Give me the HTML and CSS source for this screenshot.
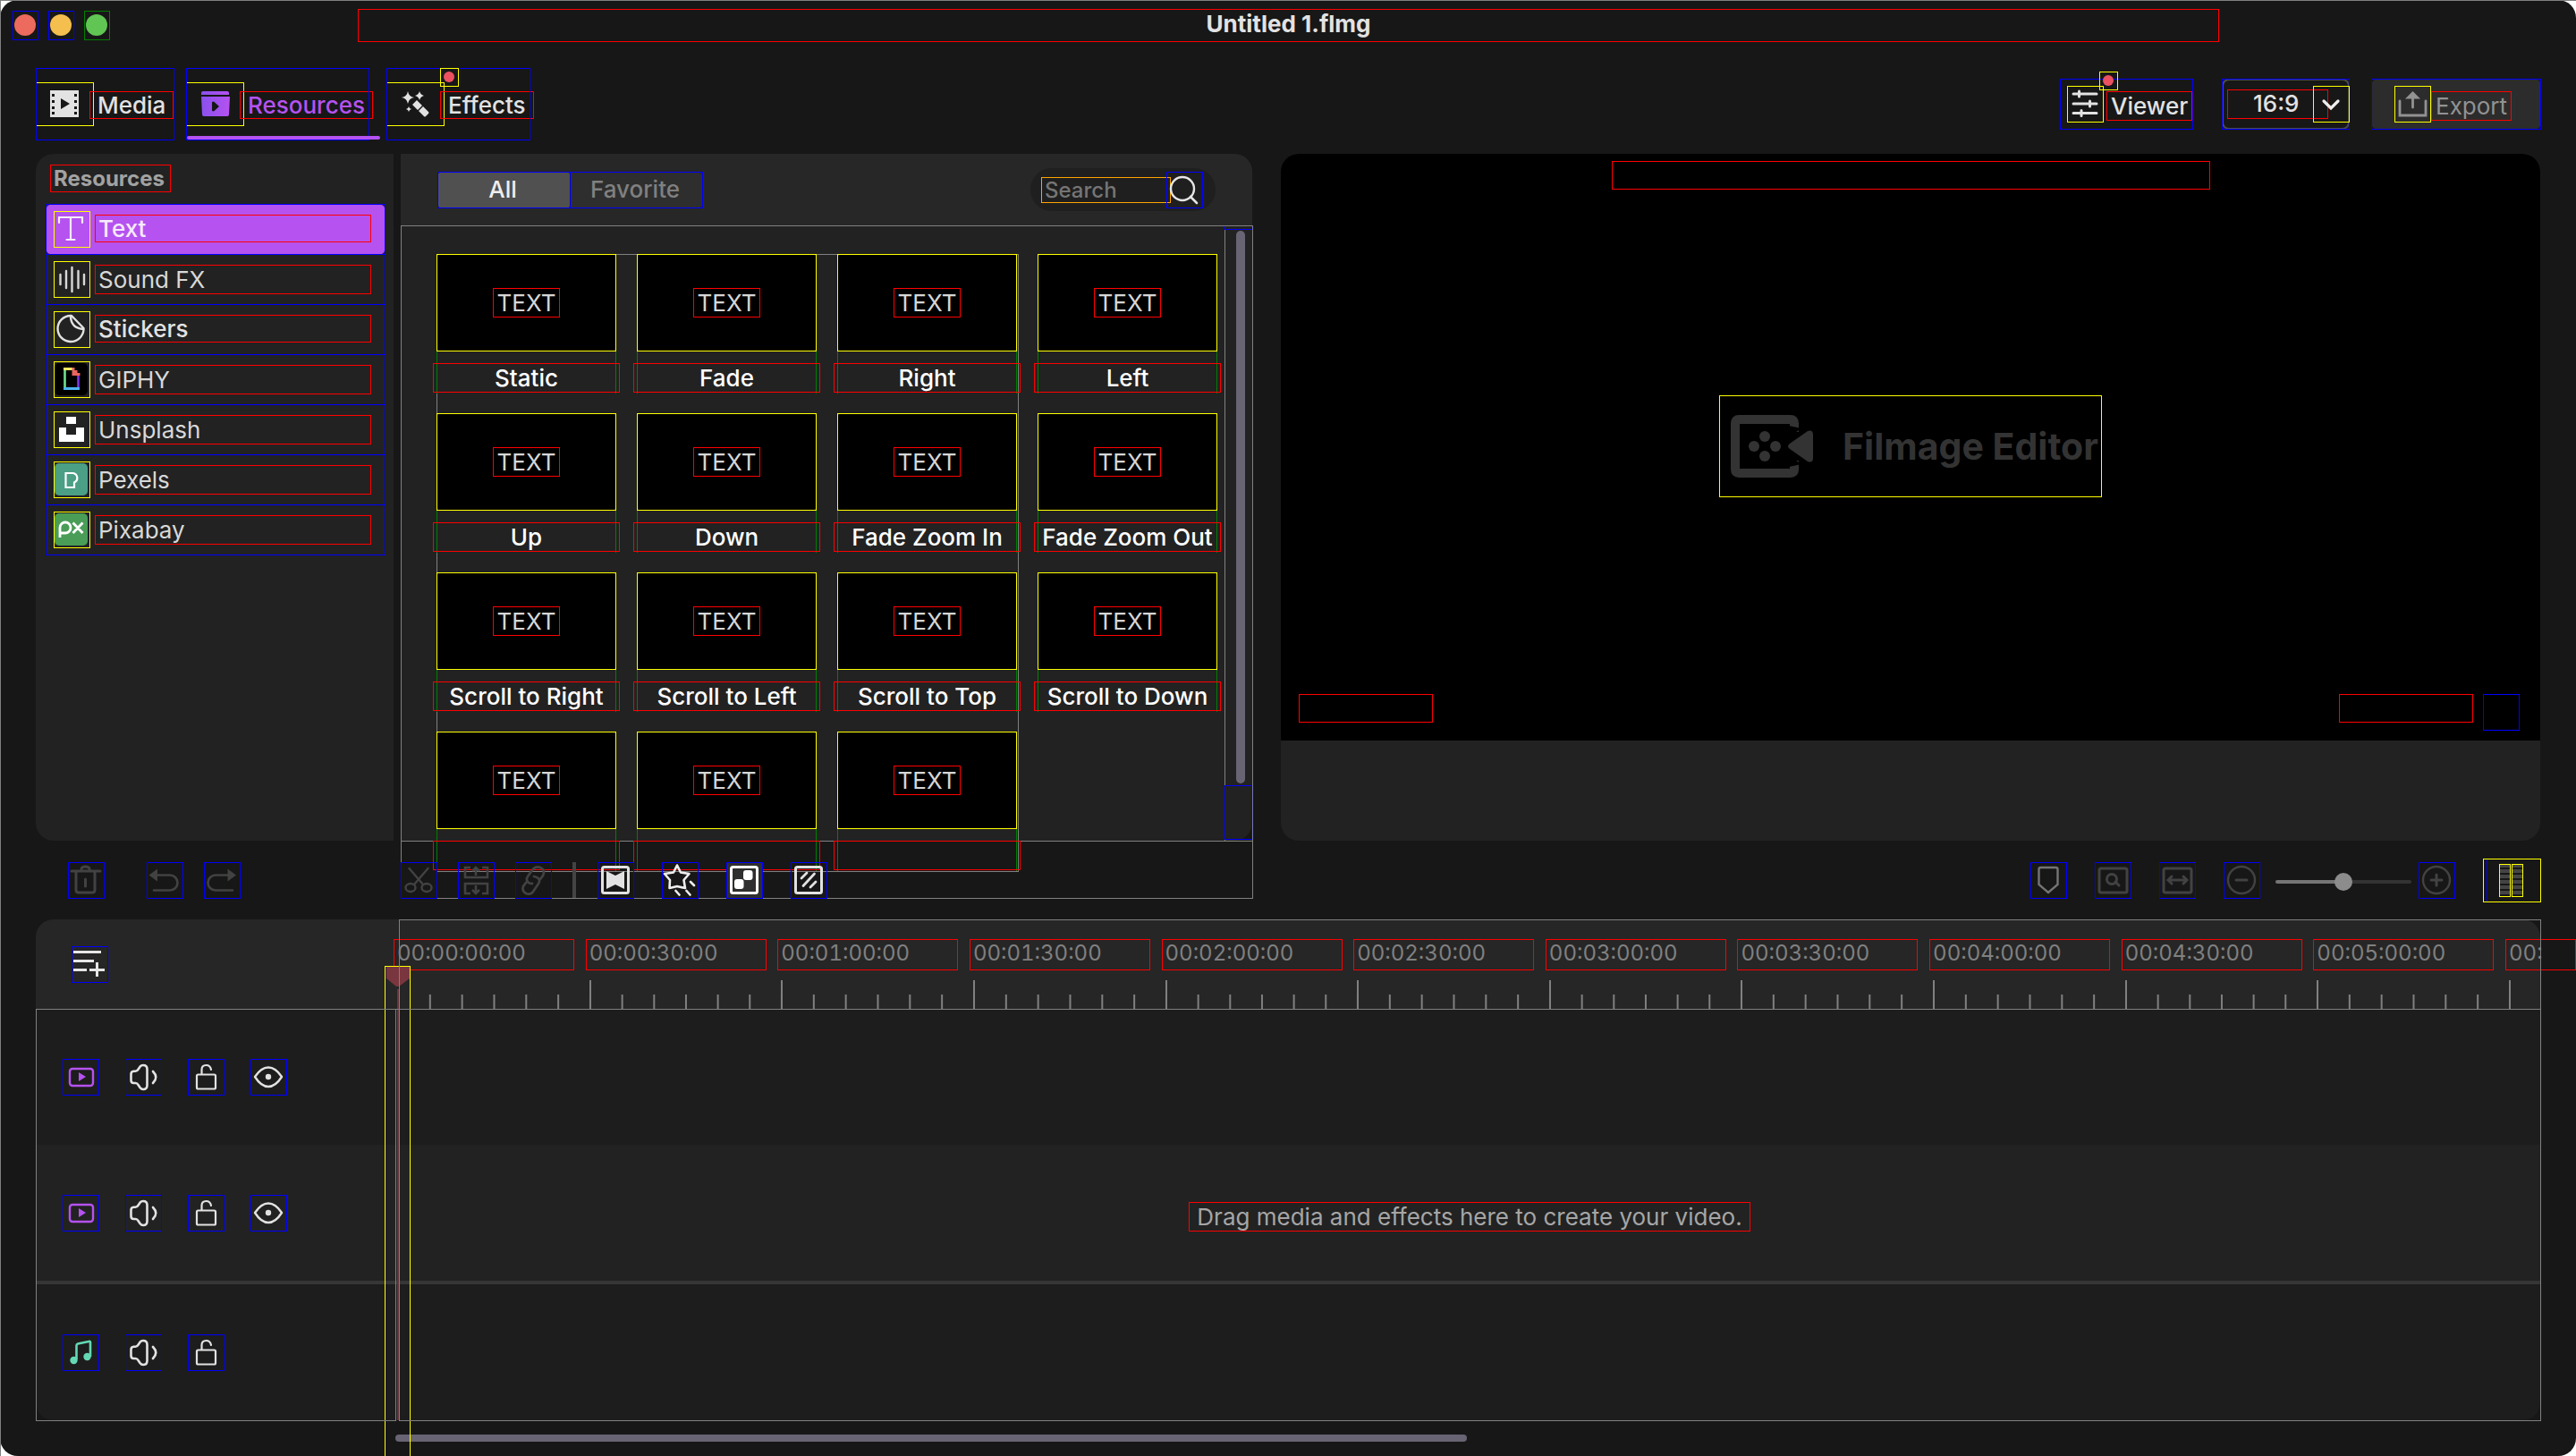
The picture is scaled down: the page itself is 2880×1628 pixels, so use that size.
FILE: index.html
```html
<!DOCTYPE html>
<html lang="en">
<head>
<meta charset="utf-8">
<title>Untitled 1.flmg</title>
<link rel="stylesheet" href="styles.css">
</head>
<body>
<svg class="defs" aria-hidden="true">
  <symbol id="i-video" viewBox="0 0 41 41"><rect x="8" y="11" width="26" height="19" rx="3" fill="none" stroke="currentColor" stroke-width="2.4"/><path d="M18 15l8 5-8 5z" fill="currentColor"/></symbol>
  <symbol id="i-sound" viewBox="0 0 41 41"><path d="M6.500 17q0-3 3-3.300h2q2 0 3-2l2-3Q18 7 20 7q4.500 0 4.500 4.500v18Q24.500 34 20 34q-2 0-3.500-2l-2-3q-1-2-3-2h-2q-3 0-3-3zM31 14q6.500 6.500 0 13" fill="none" stroke="currentColor" stroke-width="2.6" stroke-linecap="round"/></symbol>
  <symbol id="i-lock" viewBox="0 0 41 41"><path d="M15.500 17v-5q0-5 5-5 4.500 0 5.500 5" fill="none" stroke="currentColor" stroke-width="2.200" stroke-linecap="round"/><rect x="10" y="17.500" width="21" height="16" rx="1.500" fill="none" stroke="currentColor" stroke-width="2.200"/></symbol>
  <symbol id="i-eye" viewBox="0 0 41 41"><path d="M5 20Q12 9.500 20 9.500T35 20Q28 31 20 31T5 20z" fill="none" stroke="currentColor" stroke-width="2.400" stroke-linejoin="round"/><circle cx="20" cy="20" r="3.200" fill="currentColor"/></symbol>
</svg>
<div class="window">
  <header class="titlebar">
    <button class="light red" aria-label="Close"></button>
    <button class="light amber" aria-label="Minimize"></button>
    <button class="light green" aria-label="Zoom"></button>
    <h1 class="title box-red">Untitled 1.flmg</h1>
  </header>

  <nav class="topbar">
    <button class="tab tab-media box-blue">
      <svg class="tab-icon box-yellow" viewBox="0 0 65 49"><path fill="#e2e2e2" fill-rule="evenodd" d="M16 9h32v30H16zM18 13v3h3v-3zM18 20v3h3v-3zM18 27v3h3v-3zM18 33v3h3v-3zM43 13v3h3v-3zM43 20v3h3v-3zM43 27v3h3v-3zM43 33v3h3v-3zM28 18v12l10-6z"/></svg>
      <span class="tab-label box-red">Media</span>
    </button>
    <button class="tab tab-resources active box-blue">
      <svg class="tab-icon box-yellow" viewBox="0 0 65 49"><defs><linearGradient id="g"><stop offset="0" stop-color="#8a50ee"/><stop offset="1" stop-color="#b552f0"/></linearGradient></defs><path fill="url(#g)" fill-rule="evenodd" d="M19 10h27q2 0 2 2v2H17v-2q0-2 2-2zM17 16h32l-1 20q0 2-2 2H20q-2 0-2-2zM29 22v10l2 .5 6-5.500-6-5.500z"/></svg>
      <span class="tab-label box-red">Resources</span>
    </button>
    <button class="tab tab-effects box-blue">
      <svg class="tab-icon box-yellow" viewBox="0 0 65 49"><g fill="#e2e2e2"><path d="M24 10q1 6 7 7-6 1-7 7-1-6-7-7 6-1 7-7zM37 10q1 4 5 5-4 1-5 5-1-4-5-5 4-1 5-5zM25 27q.5 2.500 3 3-2.500.5-3 3-.5-2.500-3-3 2.500-.5 3-3z"/><path d="M34 20l6 6-5 5-6-6zM41 27l6 6q1 1 0 2l-3 3q-1 1-2 0l-6-6z"/></g></svg>
      <span class="tab-label box-red">Effects</span>
      <span class="dot box-yellow"></span>
    </button>
    <div class="actions">
      <button class="viewer box-blue">
        <svg class="icon box-yellow" viewBox="0 0 41 41"><path d="M7 9h26M7 20h26M7 30.500h26M13.500 6v6M25.500 17v6M16 27.500v6" stroke="#e2e2e2" stroke-width="3" stroke-linecap="round"/></svg>
        <span class="btn-label box-red">Viewer</span>
        <span class="dot box-yellow"></span>
      </button>
      <div class="ratio box-blue">
        <select aria-label="Aspect ratio"><option>16:9</option></select>
        <span class="ratio-text-box box-red"></span>
        <svg class="ratio-arrow icon box-yellow" viewBox="0 0 41 41"><path d="M12 17l8 8 8-8" fill="none" stroke="#eee" stroke-width="3.200" stroke-linecap="round"/></svg>
      </div>
      <button class="export ring ring-blue">
        <svg class="icon box-yellow" viewBox="0 0 41 41"><path d="M6 17v16h29V17M20.500 14v10" fill="none" stroke="#929292" stroke-width="2.800" stroke-linecap="round"/><path d="M20.500 6l8.500 8.500H12z" fill="#929292"/></svg>
        <span class="btn-label box-red">Export</span>
      </button>
    </div>
  </nav>

  <main class="workspace">
    <aside class="sidebar">
      <h2 class="side-title box-red">Resources</h2>
      <ul class="side-list">
        <li><a class="side-item selected strong ring ring-blue" href="#text"><svg class="icon box-yellow" viewBox="0 0 41 41"><path d="M6 13V7h26v6M19 7v25M14.500 32h9" fill="none" stroke="#f6eafd" stroke-width="2.200" stroke-linecap="round"/></svg><span class="side-label box-red">Text</span></a></li>
        <li><a class="side-item box-blue" href="#sound"><svg class="icon box-yellow" viewBox="0 0 41 41"><path d="M7.500 15v11M14 11v19M20.500 7v27M27.500 11v19M34 15v11" stroke="#d8d8d8" stroke-width="2.400" stroke-linecap="round"/></svg><span class="side-label box-red">Sound FX</span></a></li>
        <li><a class="side-item strong box-blue" href="#stickers"><svg class="icon box-yellow" viewBox="0 0 41 41"><path d="M19 5a14.500 14.500 0 1 0 14.500 15.500V19L20 5zM19 5q0 14 14.500 15" fill="none" stroke="#e2e2e2" stroke-width="2.400" stroke-linejoin="round"/></svg><span class="side-label box-red">Stickers</span></a></li>
        <li><a class="side-item box-blue" href="#giphy"><svg class="icon box-yellow" viewBox="0 0 41 41"><rect x="1" y="2" width="37" height="36" rx="5"/><path d="M11 8.500h10" stroke="#f5e663" stroke-width="3"/><path d="M12.500 10v20" stroke="#6fe08e" stroke-width="2.600"/><path d="M11 30.500h18" stroke="#4eb4f0" stroke-width="3"/><path d="M27.500 16v13" stroke="#7a35e8" stroke-width="2.600"/><path d="M20.500 7h3v3h3v3h3v3h-9z" fill="#e8655f"/></svg><span class="side-label box-red">GIPHY</span></a></li>
        <li><a class="side-item box-blue" href="#unsplash"><svg class="icon box-yellow" viewBox="0 0 41 41"><path d="M14 6h11v8H14zM6 18h8v8h11v-8h9v16H6z" fill="#fff"/></svg><span class="side-label box-red">Unsplash</span></a></li>
        <li><a class="side-item box-blue" href="#pexels"><svg class="icon box-yellow" viewBox="0 0 41 41"><rect x="1" y="2" width="37" height="36" rx="5" fill="#4a9f84"/><path d="M13.500 13h8a5.500 5.500 0 0 1 1.500 10.500V29h-9.500z" fill="none" stroke="#fff" stroke-width="2.200"/></svg><span class="side-label box-red">Pexels</span></a></li>
        <li><a class="side-item box-blue" href="#pixabay"><svg class="icon box-yellow" viewBox="0 0 41 41"><rect x="1" y="2" width="37" height="36" rx="5" fill="#4a9d57"/><path d="M7 29V18a6 6 0 1 1 6 6H8M21.500 12.500l11 11.500M32.500 12.500l-11 11.500" fill="none" stroke="#fff" stroke-width="2.800"/></svg><span class="side-label box-red">Pixabay</span></a></li>
      </ul>
    </aside>

    <section class="library">
      <div class="library-head">
        <div class="segmented">
          <button class="segment on ring ring-blue">All</button>
          <button class="segment ring ring-blue">Favorite</button>
        </div>
        <div class="search">
          <input class="box-orange" type="text" placeholder="Search" aria-label="Search">
          <button class="icon search-btn box-blue" aria-label="Search"><svg viewBox="0 0 41 41"><circle cx="18" cy="19" r="13" fill="none" stroke="#e6e6e6" stroke-width="2.400"/><path d="M27 28l7 7" stroke="#e6e6e6" stroke-width="2.600" stroke-linecap="round"/></svg></button>
        </div>
      </div>
      <div class="library-body">
        <ul class="grid">
          <li class="card"><div class="thumb ring"><span class="box-red">TEXT</span></div><p class="caption box-red">Static</p></li>
          <li class="card"><div class="thumb ring"><span class="box-red">TEXT</span></div><p class="caption box-red">Fade</p></li>
          <li class="card"><div class="thumb ring"><span class="box-red">TEXT</span></div><p class="caption box-red">Right</p></li>
          <li class="card"><div class="thumb ring"><span class="box-red">TEXT</span></div><p class="caption box-red">Left</p></li>
          <li class="card"><div class="thumb ring"><span class="box-red">TEXT</span></div><p class="caption box-red">Up</p></li>
          <li class="card"><div class="thumb ring"><span class="box-red">TEXT</span></div><p class="caption box-red">Down</p></li>
          <li class="card"><div class="thumb ring"><span class="box-red">TEXT</span></div><p class="caption box-red">Fade Zoom In</p></li>
          <li class="card"><div class="thumb ring"><span class="box-red">TEXT</span></div><p class="caption box-red">Fade Zoom Out</p></li>
          <li class="card"><div class="thumb ring"><span class="box-red">TEXT</span></div><p class="caption box-red">Scroll to Right</p></li>
          <li class="card"><div class="thumb ring"><span class="box-red">TEXT</span></div><p class="caption box-red">Scroll to Left</p></li>
          <li class="card"><div class="thumb ring"><span class="box-red">TEXT</span></div><p class="caption box-red">Scroll to Top</p></li>
          <li class="card"><div class="thumb ring"><span class="box-red">TEXT</span></div><p class="caption box-red">Scroll to Down</p></li>
          <li class="card"><div class="thumb ring"><span class="box-red">TEXT</span></div><p class="caption box-red"></p></li>
          <li class="card"><div class="thumb ring"><span class="box-red">TEXT</span></div><p class="caption box-red"></p></li>
          <li class="card"><div class="thumb ring"><span class="box-red">TEXT</span></div><p class="caption box-red"></p></li>
        </ul>
        <div class="scrollbar">
          <div class="scroll-top box-blue"></div>
          <div class="scroll-thumb"></div>
          <div class="scroll-bottom box-blue"></div>
        </div>
      </div>
    </section>

    <section class="preview">
      <div class="screen">
        <div class="screen-title box-red"></div>
        <div class="brand box-yellow">
          <svg viewBox="0 0 106 112"><g fill="none" stroke="#333" stroke-width="10"><path d="M84 40V30q0-4-4-4H22q-4 0-4 4v52q0 4 4 4h58q4 0 4-4V72"/></g><path d="M78 33L92 36 76 47zM78 79L92 76 76 65z" fill="#000"/><path d="M79 53l20-14q6-2 6 4v26q0 6-6 4L79 59q-4-3 0-6z" fill="#333"/><g fill="#333"><circle cx="51" cy="45" r="6"/><circle cx="39" cy="56" r="6"/><circle cx="63" cy="56" r="6"/><circle cx="51" cy="67" r="6"/></g></svg>
          <span>Filmage Editor</span>
        </div>
        <div class="screen-foot">
          <span class="time box-red"></span>
          <span class="time time-end box-red"></span>
          <button class="icon box-blue" aria-label="Full screen"></button>
        </div>
      </div>
    </section>
  </main>

  <div class="toolbar">
    <div class="tools-left">
      <button class="icon dim box-blue" aria-label="Delete"><svg viewBox="0 0 41 41"><path d="M4 10h32M15 8q0-3 4.500-3T24 8M9 11v20q0 3 3 3h15q3 0 3-3V11M19.500 19v8" fill="none" stroke="currentColor" stroke-width="3" stroke-linecap="round"/></svg></button>
      <button class="icon dim undo box-blue" aria-label="Undo"><svg viewBox="0 0 41 41"><path d="M10 14.500h16a8.500 8.500 0 0 1 0 17H8" fill="none" stroke="currentColor" stroke-width="2.600" stroke-linecap="round"/><path d="M2.500 14.500L12 7.500v14z" fill="currentColor"/></svg></button>
      <button class="icon dim box-blue" aria-label="Redo"><svg viewBox="0 0 41 41"><path d="M28 14.500H13a8.500 8.500 0 0 0 0 17h19" fill="none" stroke="currentColor" stroke-width="2.600" stroke-linecap="round"/><path d="M36 14.500L26.500 7.500v14z" fill="currentColor"/></svg></button>
    </div>
    <div class="tools-edit">
      <button class="icon dim box-blue" aria-label="Cut"><svg viewBox="0 0 41 41"><path d="M9.500 7l15.500 18M30.500 7L15 25" stroke="currentColor" stroke-width="2.400" stroke-linecap="round"/><g fill="none" stroke="currentColor" stroke-width="2.400"><ellipse cx="11" cy="28.500" rx="5.500" ry="4.500"/><ellipse cx="29" cy="28.500" rx="5.500" ry="4.500"/></g></svg></button>
      <button class="icon dim box-blue" aria-label="Split"><svg viewBox="0 0 41 41"><path d="M14 6H8v11h25V6h-6M20 15V7M16 10l4-4 4 4M14 35H8V24h25v11h-6M20 26v8M16 31l4 4 4-4" fill="none" stroke="currentColor" stroke-width="2.600"/></svg></button>
      <button class="icon dim box-blue" aria-label="Link"><svg viewBox="0 0 41 41"><path d="M19 24q-5 0-6-4-.5-2 1-4l5-7q4-5 9-3 6 3 3 9l-3 4M21 16q5 1 6 4 .5 2-1 4l-6 9q-3 4-8 2-5-3-3-8l3-4" fill="none" stroke="currentColor" stroke-width="2.800" stroke-linecap="round"/></svg></button>
      <span class="divider"></span>
      <button class="icon box-blue" aria-label="Transition"><svg viewBox="0 0 41 41"><rect x="5.500" y="5.500" width="29" height="29" rx="2" fill="none" stroke="#e2e2e2" stroke-width="3"/><path d="M10 10l10 5 10-5v20l-10-5-10 5z" fill="#e2e2e2"/></svg></button>
      <button class="icon wide box-blue" aria-label="Animation"><svg viewBox="0 0 41 41"><path d="M17 3.500l4 8 9.500 1.500-6 7 1.500 9-9-2-8.500 2 .5-9-6-7 10-1.500zM32 22l4 4M27.500 32l4 4.500M15.500 32l4 4.500" fill="none" stroke="#eee" stroke-width="2.600" stroke-linejoin="round" stroke-linecap="round"/></svg></button>
      <button class="icon wide lit box-blue" aria-label="Picture in picture"><svg viewBox="0 0 41 41"><rect x="5.500" y="5.500" width="29" height="29" rx="2" fill="none" stroke="#fff" stroke-width="3"/><rect x="9" y="19" width="10.500" height="11" rx="3" fill="#fff"/><rect x="19" y="9" width="10.500" height="11" rx="3" fill="#fff"/></svg></button>
      <button class="icon wide box-blue" aria-label="Background"><svg viewBox="0 0 41 41"><rect x="5.500" y="5.500" width="29" height="29" rx="2" fill="none" stroke="#e2e2e2" stroke-width="3"/><path d="M12 18l6-6M14 26.500L26.500 13M22 28l6-6" stroke="#e2e2e2" stroke-width="2.800" stroke-linecap="round"/></svg></button>
    </div>
    <div class="tools-zoom">
      <button class="icon box-blue mid" aria-label="Marker"><svg viewBox="0 0 41 41"><path d="M9.500 8q0-2 2-2h17q2 0 2 2v17l-10.500 9-10.500-9z" fill="none" stroke="currentColor" stroke-width="2.400"/></svg></button>
      <button class="icon dim box-blue" aria-label="Zoom to selection"><svg viewBox="0 0 41 41"><rect x="5" y="7" width="31" height="27" rx="2" fill="none" stroke="currentColor" stroke-width="3"/><circle cx="19" cy="19" r="5.500" fill="none" stroke="currentColor" stroke-width="3"/><path d="M23 22l4 4" stroke="currentColor" stroke-width="3" stroke-linecap="round"/></svg></button>
      <button class="icon dim box-blue" aria-label="Fit to window"><svg viewBox="0 0 41 41"><rect x="5" y="7" width="31" height="27" rx="2" fill="none" stroke="currentColor" stroke-width="3"/><path d="M12 20h17M14 16l-4 4 4 4M27 16l4 4-4 4" fill="none" stroke="currentColor" stroke-width="3" stroke-linecap="round"/></svg></button>
      <button class="icon dim box-blue" aria-label="Zoom out"><svg viewBox="0 0 41 41"><circle cx="20" cy="20" r="15" fill="none" stroke="currentColor" stroke-width="2.400"/><path d="M14 20h12" stroke="currentColor" stroke-width="3" stroke-linecap="round"/></svg></button>
      <input class="zoom-range" type="range" min="0" max="100" value="50" aria-label="Timeline zoom">
      <button class="icon dim zoom-in box-blue" aria-label="Zoom in"><svg viewBox="0 0 41 41"><circle cx="20" cy="20" r="15" fill="none" stroke="currentColor" stroke-width="2.400"/><path d="M14 20h12M20 14v12" stroke="currentColor" stroke-width="3" stroke-linecap="round"/></svg></button>
      <div class="meter box-yellow"><span class="bar box-yellow"></span><span class="bar box-yellow"></span></div>
    </div>
  </div>

  <section class="timeline">
    <div class="ruler-row">
      <div class="ruler-left">
        <button class="icon box-blue" aria-label="Add track"><svg viewBox="0 0 41 41"><path d="M2 6.500h31M2 16.500h23M2 26.500h15M20 26.500h17M28.500 18v16" stroke="#e6e6e6" stroke-width="3"/></svg></button>
      </div>
      <ol class="ruler">
        <li><span class="stamp box-red">00:00:00:00</span></li>
        <li><span class="stamp box-red">00:00:30:00</span></li>
        <li><span class="stamp box-red">00:01:00:00</span></li>
        <li><span class="stamp box-red">00:01:30:00</span></li>
        <li><span class="stamp box-red">00:02:00:00</span></li>
        <li><span class="stamp box-red">00:02:30:00</span></li>
        <li><span class="stamp box-red">00:03:00:00</span></li>
        <li><span class="stamp box-red">00:03:30:00</span></li>
        <li><span class="stamp box-red">00:04:00:00</span></li>
        <li><span class="stamp box-red">00:04:30:00</span></li>
        <li><span class="stamp box-red">00:05:00:00</span></li>
        <li class="last"><span class="stamp box-red">00:</span></li>
      </ol>
    </div>
    <div class="track">
      <div class="track-head">
        <button class="icon purple box-blue" aria-label="Video track"><svg><use href="#i-video"/></svg></button>
        <button class="icon box-blue" aria-label="Mute"><svg><use href="#i-sound"/></svg></button>
        <button class="icon box-blue" aria-label="Lock"><svg><use href="#i-lock"/></svg></button>
        <button class="icon box-blue" aria-label="Hide"><svg><use href="#i-eye"/></svg></button>
      </div>
    </div>
    <div class="track main-track">
      <div class="track-head">
        <button class="icon purple box-blue" aria-label="Video track"><svg><use href="#i-video"/></svg></button>
        <button class="icon box-blue" aria-label="Mute"><svg><use href="#i-sound"/></svg></button>
        <button class="icon box-blue" aria-label="Lock"><svg><use href="#i-lock"/></svg></button>
        <button class="icon box-blue" aria-label="Hide"><svg><use href="#i-eye"/></svg></button>
      </div>
      <div class="track-lane"><p class="hint box-red">Drag media and effects here to create your video.</p></div>
    </div>
    <div class="track audio-track">
      <div class="track-head">
        <button class="icon mint box-blue" aria-label="Audio track"><svg viewBox="0 0 41 41"><path d="M15.500 28V12.500q0-1.500 1.500-2l12-2.500q2-.5 2 1v16" fill="none" stroke="currentColor" stroke-width="2.600"/><circle cx="12.500" cy="29" r="4.200" fill="currentColor"/><circle cx="27.500" cy="25" r="4.200" fill="currentColor"/></svg></button>
        <button class="icon box-blue" aria-label="Mute"><svg><use href="#i-sound"/></svg></button>
        <button class="icon box-blue" aria-label="Lock"><svg><use href="#i-lock"/></svg></button>
      </div>
    </div>
    <div class="playhead">
      <svg viewBox="0 0 29 24"><path d="M2 1h26v13L16 23h-3L2 14z" fill="#7a363e"/></svg>
    </div>
    <div class="heads-outline"></div>
    <div class="lanes-outline"></div>
  </section>
  <div class="h-scroll"></div>
</div>
</body>
</html>
```

FILE: styles.css
```css
* { box-sizing: border-box; }

body {
  margin: 0;
  background: #fff;
  color: #e2e2e2;
  font: 26px/32px Inter, "Liberation Sans", sans-serif;
}

h1, h2, p, ul, ol { margin: 0; padding: 0; list-style: none; }
button, input, select { font: inherit; color: inherit; border: 0; padding: 0; margin: 0; background: none; }
svg { display: block; }
a { color: inherit; text-decoration: none; }
.defs { position: absolute; width: 0; height: 0; }

/* layout outlines */
.box-red, .box-blue, .box-yellow, .box-orange { outline: 1px solid #f00; outline-offset: -1px; }
.box-blue { outline-color: #00f; }
.box-yellow { outline-color: #ff0; }
.box-orange { outline-color: #ffa500; }
/* square outline over a rounded box */
.ring { position: relative; }
.ring::after { content: ""; position: absolute; inset: 0; border: 1px solid #ff0; pointer-events: none; }
.ring-blue::after { border-color: #00f; }

.window {
  position: relative;
  display: flex;
  flex-direction: column;
  height: 100vh;
  min-height: 1400px;
  background: #171717;
  border-radius: 20px;
}
.window::before {
  content: "";
  position: absolute;
  inset: 0;
  border-top: 1px solid #808080;
  border-left: 1px solid #808080;
  pointer-events: none;
}

.icon { flex: none; width: 41px; height: 41px; }
.icon svg { width: 41px; height: 41px; }

/* title bar */
.titlebar { position: relative; display: flex; gap: 11px; height: 76px; padding: 12px 14px; }
.light { width: 29px; height: 33px; outline: 1px solid #00f; outline-offset: -1px; }
.light::before { content: ""; display: block; width: 24px; height: 24px; margin: -1px 0 0 2px; border-radius: 50%; background: #ec6a5e; }
.amber::before { background: #f4bf4f; }
.green::before { background: #61c554; }
.light.green { outline-color: #008000; }
.title {
  position: absolute;
  left: 400px;
  right: 399px;
  top: 10px;
  height: 37px;
  font-size: 26px;
  line-height: 34px;
  font-weight: 700;
  text-align: center;
}

/* top bar */
.topbar { display: flex; height: 80px; padding: 0 39px 0 40px; flex: none; }
.tab { position: relative; display: flex; height: 81px; padding-top: 16px; margin-right: 13px; font-weight: 500; }
.tab-media { width: 155px; }
.tab-resources { width: 205px; margin-right: 19px; }
.tab-effects { width: 161px; }
.tab-icon { flex: none; width: 65px; height: 49px; }
.tab-label { flex: none; height: 31px; margin: 10px 0 0 -5px; padding: 0 9px; line-height: 31px; }
.tab.active { color: #b552f0; }
.tab.active::after { content: ""; position: absolute; left: 1px; right: -12px; bottom: 1px; height: 4px; border-radius: 2px; background: #b552f0; }
.dot { position: absolute; width: 21px; height: 21px; }
.dot::before { content: ""; display: block; width: 12px; height: 12px; margin: 4px; border-radius: 50%; background: #ec5160; }
.tab-effects .dot { left: 60px; top: 0; }
.actions { display: flex; margin: 12px 0 0 auto; }
.actions > * { display: flex; height: 57px; position: relative; }
.btn-label { height: 33px; line-height: 34px; margin-top: 14px; padding: 0 5px; }
.viewer { width: 149px; padding-left: 8px; font-weight: 500; }
.actions .icon { margin-top: 8px; }
.viewer .btn-label { margin-left: 3px; }
.viewer .dot { left: 44px; top: -8px; }
.ratio { width: 143px; margin: 0 24px 0 32px; }
.ratio select { appearance: none; width: 100%; padding: 0 0 2px 33px; border: 2px solid #4c4c4c; border-radius: 8px; font-weight: 500; }
.ratio-text-box { position: absolute; left: 6px; top: 12px; width: 113px; height: 33px; }
.ratio-arrow { position: absolute; right: 0; top: 0; }
.export { width: 190px; padding-left: 26px; border-radius: 8px; background: #2c2c2c; color: #929292; }

/* workspace */
.workspace {
  display: grid;
  grid-template-columns: 400px 952px minmax(0, 1fr);
  grid-template-rows: minmax(0, 1fr);
  column-gap: 8px;
  flex: 1 1 0;
  min-height: 0;
  padding: 16px 40px 0;
}
.sidebar { background: #222; border-radius: 20px 0 0 20px; padding: 12px 9px 0 11px; }
.side-title { width: 135px; height: 31px; padding-left: 4px; margin: 0 0 13px 5px; font-size: 24px; line-height: 31px; font-weight: 700; color: #a2a2a2; }
.side-item { display: flex; height: 57px; margin-bottom: -1px; padding: 8px 16px 0 9px; color: #d8d8d8; }
.side-label { flex: 1; height: 33px; margin: 4px 0 0 5px; padding-left: 4px; line-height: 33px; }
.strong { font-weight: 500; color: #e2e2e2; }
.strong .side-label { height: 31px; line-height: 31px; }
.selected { background: #b552f0; border-radius: 8px; color: #f6eafd; }

.library { position: relative; display: flex; flex-direction: column; background: #222; border-radius: 0 20px 20px 0; }
.library::before, .library::after { content: ""; position: absolute; left: 0; right: -1px; top: 80px; border: 1px solid #808080; pointer-events: none; }
.library::before { bottom: -1px; }
.library::after { bottom: -65px; }
.library-head { display: flex; justify-content: space-between; flex: none; height: 80px; padding: 16px 41px 0 41px; background: #272727; border-radius: 0 20px 0 0; }
.segmented { display: flex; height: 41px; margin-top: 4px; border-radius: 6px; background: #2e2e2e; }
.segment { width: 149px; margin-right: -1px; padding: 0 3px 1px 0; border-radius: 6px; color: #808080; font-weight: 500; }
.segment.on { background: #505050; color: #eee; }
.search { display: flex; width: 207px; height: 48px; padding: 4px 15px 0 12px; border-radius: 24px; background: #1f1f1f; }
.search input { width: 145px; height: 29px; margin-top: 6px; padding-left: 4px; font-weight: 500; font-size: 24px; }
.search input::placeholder { color: #757575; opacity: 1; }
.search-btn { margin-left: -5px; }
.library-body { display: flex; flex: 1; min-height: 0; }
.grid {
  position: relative;
  display: grid;
  grid-template-columns: repeat(4, 201px);
  grid-auto-rows: 156px;
  gap: 22px 23px;
  width: 922px;
  padding: 32px 0 0 40px;
}
.grid::before { content: ""; position: absolute; left: 40px; top: 32px; width: 649px; height: 689px; border: 1px solid #808080; }
.card { position: relative; height: 156px; border: 1px solid #008000; border-top: 0; border-bottom: 0; }
.thumb { display: flex; align-items: center; justify-content: center; height: 109px; margin: 0 -1px; border-radius: 6px; background: #000; }
.thumb span { height: 33px; padding: 0 5px; line-height: 34px; color: #d6d6d6; }
.caption { height: 33px; margin: 13px -5px 0; line-height: 34px; text-align: center; white-space: nowrap; color: #fff; font-weight: 500; }
.scrollbar { position: relative; display: flex; flex-direction: column; width: 31px; border-left: 1px solid #808080; }
.scroll-top { height: 5px; margin-left: -1px; }
.scroll-thumb { flex: 1; width: 10px; margin: 1px 0 2px 12px; border-radius: 5px; background: #686473; }
.scroll-bottom { height: 61px; margin: 0 0 1px -1px; }

.preview { display: flex; flex-direction: column; margin-left: 24px; border-radius: 20px; background: #222; overflow: hidden; }
.screen { display: flex; flex-direction: column; align-items: center; justify-content: space-between; flex: 1; margin-bottom: 112px; padding-top: 8px; background: #000; }
.screen-title { width: 669px; height: 32px; }
.brand { display: flex; align-items: center; width: 428px; height: 114px; margin-top: 10px; color: #333; font-size: 41px; font-weight: 700; white-space: nowrap; }
.brand svg { flex: none; width: 106px; height: 112px; }
.brand span { margin-left: 32px; }
.screen-foot { display: flex; align-self: stretch; height: 52px; padding: 0 23px 0 20px; }
.time { width: 150px; height: 32px; }
.time-end { margin: 0 11px 0 auto; }

/* toolbar */
.toolbar { position: relative; display: flex; flex: none; height: 88px; padding: 24px 39px 0 76px; }
.toolbar > div { display: flex; }
.dim { color: #424242; }
.mid { color: #757575; }
.tools-left { width: 372px; }
.undo { margin: 0 23px 0 47px; }
.tools-edit { gap: 23px; }
.divider { width: 4px; height: 40px; margin-right: 1px; background: #444; }
.wide { margin-left: 8px; }
.lit { background: #2e2e2e; }
.tools-zoom { margin-left: auto; gap: 31px; }
.zoom-range { appearance: none; width: 152px; height: 20px; margin: 12px -23px 0 -14px; }
.zoom-range::-webkit-slider-runnable-track { height: 4px; border-radius: 2px; background: linear-gradient(to right, #757575 50%, #333 50%); }
.zoom-range::-webkit-slider-thumb { appearance: none; width: 20px; height: 20px; margin-top: -8px; border-radius: 50%; background: #8c8c8c; }
.meter { position: relative; display: flex; gap: 1px; width: 65px; height: 49px; margin-top: -4px; padding: 6px 0 0 18px; }
.meter::before { content: ""; position: absolute; left: 4px; top: 1px; bottom: 1px; width: 1px; background: #00f; }
.bar { width: 13px; height: 37px; background: repeating-linear-gradient(#444 0 4px, #171717 4px 6px); }

/* timeline */
.timeline { position: relative; flex: none; margin: 0 40px; border-radius: 20px; background: #1d1d1d; }
.ruler-row { display: flex; height: 100px; border-radius: 20px 20px 0 0; background: #262626; }
.ruler-left { width: 404px; flex: none; padding: 30px 0 0 40px; }
.ruler { display: grid; grid-template-columns: repeat(11, minmax(0, 1fr)) 35px; flex: 1; font-size: 24px; font-variant-numeric: tabular-nums; color: #808080; }
.ruler li {
  padding-top: 22px;
  background:
    linear-gradient(#808080, #808080) left bottom / 2px 32px no-repeat,
    linear-gradient(to right, #808080 2px, transparent 2px) left bottom / calc(100% / 6) 16px repeat-x;
}
.ruler li:first-child { background-size: 0 0, calc(100% / 6) 16px; }
.ruler li.last { background: linear-gradient(#808080, #808080) left bottom / 2px 32px no-repeat; }
.stamp { display: block; width: 202px; height: 35px; margin-left: -4px; padding-left: 4px; line-height: 31px; }
.last .stamp { width: 79px; margin-right: -40px; }

.track { display: flex; height: 152px; }
.track-head { display: flex; align-items: center; gap: 29px; width: 406px; padding-left: 30px; }
.main-track { height: 156px; background: #222; border-bottom: 4px solid #363636; }
.audio-track { border-radius: 0 0 20px 20px; }
.purple { color: #b552f0; }
.mint { color: #64d8b4; }
.track-lane { display: flex; flex: 1; align-items: center; justify-content: center; }
.hint { height: 33px; padding: 0 9px; margin-top: 8px; font-weight: 400; line-height: 34px; color: #a6a6a6; }
.heads-outline, .lanes-outline { position: absolute; top: 100px; bottom: -1px; left: 0; width: 403px; border: 1px solid #808080; pointer-events: none; }
.lanes-outline { top: 0; left: 406px; right: -1px; width: auto; }
.lanes-outline::before { content: ""; position: absolute; top: 99px; left: -4px; right: 0; border-top: 1px solid #808080; }
.playhead { position: absolute; left: 390px; top: 52px; bottom: -40px; width: 29px; border: 1px solid #ff0; border-bottom: 0; }
.playhead svg { width: 29px; height: 24px; margin: -1px; }
.playhead::after { content: ""; position: absolute; left: 13px; top: 25px; bottom: 40px; width: 2px; background: #6b343b; }

.h-scroll { flex: none; width: 1198px; height: 8px; margin: 16px 0 16px 442px; border-radius: 4px; background: #686473; }
```
